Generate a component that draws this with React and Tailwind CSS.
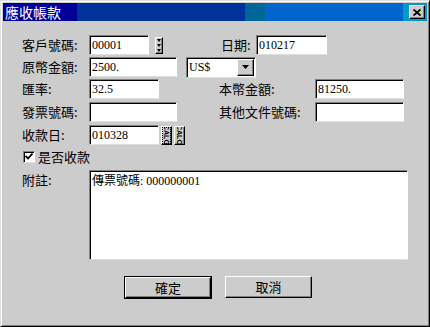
import React from 'react';

const cjk = "font-['Noto_Sans_CJK_TC','Noto_Sans_CJK_SC',sans-serif]";
const field =
  "h-5 bg-white border border-t-[#808080] border-l-[#808080] border-r-white border-b-[#dfdfdf] shadow-[inset_1px_1px_0_#000] pl-[2px] text-[12px] leading-[18px] text-black font-['Liberation_Serif',serif]";
const raised =
  "bg-[#cccccc] border border-t-white border-l-white border-r-black border-b-black shadow-[inset_-1px_-1px_0_#808080]";

const Label = ({ children, w = 'w-[67px]' }) => (
  <div className={`${w} shrink-0 text-[13px] leading-5 text-black ${cjk}`}>{children}</div>
);

const CalcButton = ({ dotted }) => (
  <div
    className={`${raised} w-[11px] h-[19px] flex items-center justify-center overflow-hidden ${
      dotted ? 'outline-1 outline-dotted outline-black -outline-offset-2' : ''
    }`}
  >
    <span className="[writing-mode:vertical-rl] text-[7px] leading-none font-bold font-['Liberation_Sans',sans-serif]">
      CALC
    </span>
  </div>
);

const App = () => {
  return (
    <div className="w-[430px] h-[327px] bg-[#cccccc] border border-t-[#dfdfdf] border-l-[#dfdfdf] border-r-black border-b-black shadow-[inset_1px_1px_0_#fff,inset_-1px_-1px_0_#808080] p-[2px] flex flex-col">
      {/* title bar */}
      <div className="h-[18px] flex shrink-0">
        <div className={`w-[74px] bg-[#000099] text-white text-[14px] leading-[18px] pl-[2px] ${cjk}`}>應收帳款</div>
        <div className="w-[168px] bg-[#003399]" />
        <div className="w-[20px] bg-[#006699]" />
        <div className="w-[138px] bg-[#0066cc]" />
        <div className="flex-1 bg-[#0099cc] flex items-center pl-[6px]">
          <div className={`${raised} w-[16px] h-[14px] flex items-center justify-center`}>
            <svg width="8" height="7" viewBox="0 0 8 7">
              <path d="M0.5 0.5 L7.5 6.5 M7.5 0.5 L0.5 6.5" stroke="#000" strokeWidth="1.8" />
            </svg>
          </div>
        </div>
      </div>

      {/* body */}
      <div className="flex-1 pt-[14px] pl-[19px] flex flex-col">
        <div className="flex items-center h-5">
          <Label>客戶號碼:</Label>
          <div className={`${field} w-[60px]`}>00001</div>
          <div className={`${raised} ml-[6px] w-[8px] h-[17px] flex flex-col items-center justify-center gap-[2px]`}>
            <svg width="4" height="3" viewBox="0 0 4 3"><path d="M0 0 H4 L2 3 Z" fill="#000" /></svg>
            <svg width="4" height="3" viewBox="0 0 4 3"><path d="M0 0 H4 L2 3 Z" fill="#000" /></svg>
            <svg width="4" height="3" viewBox="0 0 4 3"><path d="M0 0 H4 L2 3 Z" fill="#000" /></svg>
          </div>
          <div className="ml-[58px]"><Label w="w-[35px]">日期:</Label></div>
          <div className={`${field} w-[71px]`}>010217</div>
        </div>

        <div className="flex items-center h-5 mt-[2px]">
          <Label>原幣金額:</Label>
          <div className={`${field} w-[88px]`}>2500.</div>
          <div className={`${field} ml-[9px] w-[70px] h-[21px] flex items-center pr-[1px]`}>
            <span className="flex-1">US$</span>
            <div className={`${raised} w-[17px] h-[17px] flex items-center justify-center`}>
              <svg width="7" height="4" viewBox="0 0 7 4"><path d="M0 0 H7 L3.5 4 Z" fill="#000" /></svg>
            </div>
          </div>
        </div>

        <div className="flex items-center h-5 mt-[2px]">
          <Label>匯率:</Label>
          <div className={`${field} w-[70px]`}>32.5</div>
          <div className="ml-[60px]"><Label w="w-[96px]">本幣金額:</Label></div>
          <div className={`${field} w-[89px]`}>81250.</div>
        </div>

        <div className="flex items-center h-5 mt-[3px]">
          <Label>發票號碼:</Label>
          <div className={`${field} w-[88px]`} />
          <div className="ml-[42px]"><Label w="w-[96px]">其他文件號碼:</Label></div>
          <div className={`${field} w-[89px]`} />
        </div>

        <div className="flex items-center h-5 mt-[3px]">
          <Label>收款日:</Label>
          <div className={`${field} w-[70px]`}>010328</div>
          <div className="ml-[2px]"><CalcButton dotted /></div>
          <div className="ml-[2px]"><CalcButton /></div>
        </div>

        <div className="flex items-center h-[13px] mt-[5px] pl-[1px]">
          <div className="w-[12px] h-[12px] bg-white border border-t-[#808080] border-l-[#808080] border-r-white border-b-[#dfdfdf] shadow-[inset_1px_1px_0_#000] flex items-center justify-center">
            <svg width="8" height="7" viewBox="0 0 8 7">
              <path d="M0.5 3 L3 5.5 L7.5 0.5" stroke="#000" strokeWidth="1.8" fill="none" />
            </svg>
          </div>
          <span className={`ml-[3px] text-[13px] leading-5 text-black ${cjk}`}>是否收款</span>
        </div>

        <div className="flex mt-[7px]">
          <Label>附註:</Label>
          <div className={`${field} w-[319px] h-[90px] leading-[17px]`}>
            <span className={cjk}>傳票號碼</span>: 000000001
          </div>
        </div>

        <div className="flex mt-[16px] pl-[102px]">
          <div className="border border-black">
            <div className={`${raised} w-[86px] h-[21px] flex items-center justify-center text-[13px] ${cjk}`}>確定</div>
          </div>
          <div className={`${raised} ml-[13px] w-[87px] h-[22px] flex items-center justify-center text-[13px] ${cjk}`}>取消</div>
        </div>
      </div>
    </div>
  );
};

export default App;
